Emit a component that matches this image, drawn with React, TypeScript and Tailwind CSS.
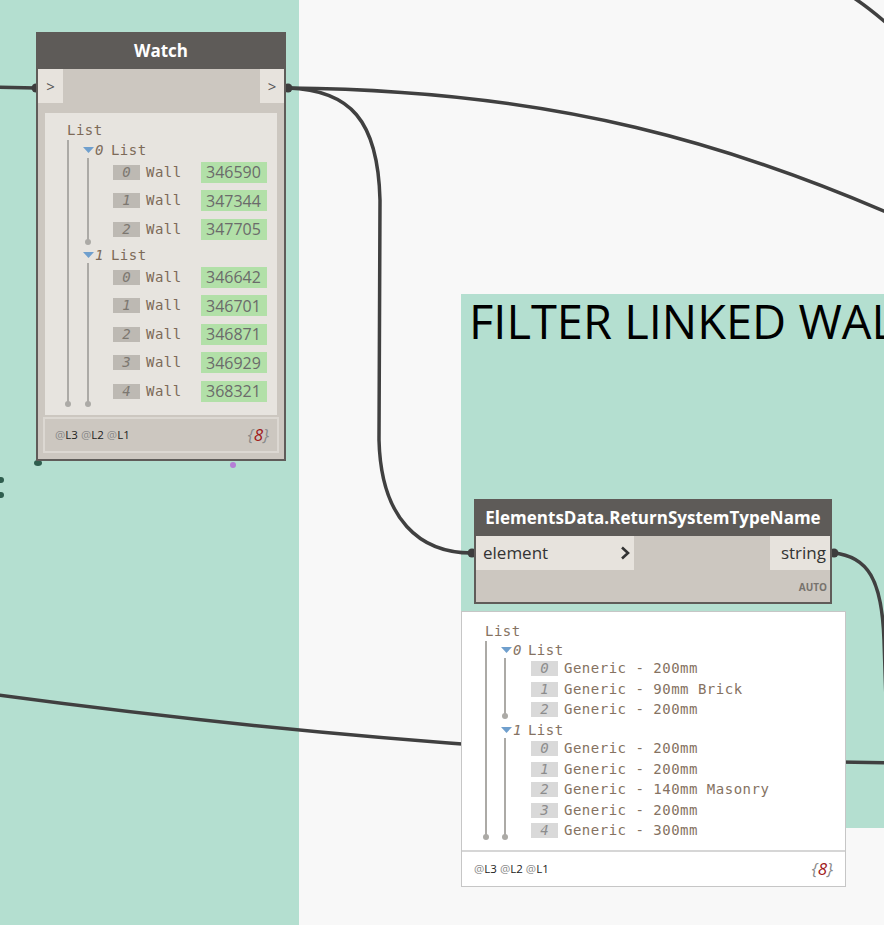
import React from "react";

const WATCH_DATA = [
  ["346590", "347344", "347705"],
  ["346642", "346701", "346871", "346929", "368321"],
];

const PREVIEW_DATA = [
  ["Generic - 200mm", "Generic - 90mm Brick", "Generic - 200mm"],
  ["Generic - 200mm", "Generic - 200mm", "Generic - 140mm Masonry", "Generic - 200mm", "Generic - 300mm"],
];

const mono = { fontFamily: '"DejaVu Sans Mono", "Liberation Mono", monospace' };
const sans = { fontFamily: '"Open Sans", "Noto Sans", sans-serif' };

// little blue disclosure triangle
const Tri = () => (
  <svg width="11" height="6" viewBox="0 0 11 6" className="shrink-0">
    <path d="M0 0 L11 0 L5.5 6 Z" fill="#6f9fcd" />
  </svg>
);

// vertical tree line that ends in a dot
const TreeLine = ({ className }: { className: string }) => (
  <div className={`absolute w-[2px] bg-[#acaaa6] ${className}`}>
    <div className="absolute -bottom-[3px] -left-[2px] h-[6px] w-[6px] rounded-full bg-[#acaaa6]" />
  </div>
);

const WatchTree = () => (
  <div className="relative pl-[22px] pt-[6px] pb-[9px]">
    <div className="flex h-[19.5px] items-center pt-[4px] text-[14px] tracking-[0.5px] text-[#7d6a58]" style={mono}>
      List
    </div>
    <div className="relative">
      <TreeLine className="left-0 top-[1px] bottom-[2px]" />
      {WATCH_DATA.map((sub, si) => (
        <div key={si} className="relative pl-[16px]">
          <div className="flex h-[19.5px] items-center pt-[4px] text-[14px] tracking-[0.5px] text-[#7d6a58]" style={mono}>
            <Tri />
            <span className="ml-[1px] italic">{si}</span>
            <span className="ml-[7px]">List</span>
          </div>
          <TreeLine className="left-[20px] top-[19.5px] bottom-[2px]" />
          {sub.map((v, i) => (
            <div key={i} className="flex h-[28.5px] items-center pl-[30px]">
              <div
                className="flex h-[15px] w-[27px] items-center justify-center bg-[#bdb9b3] text-[14px] italic text-[#7c7770]"
                style={mono}
              >
                {i}
              </div>
              <span className="ml-[6px] w-[55px] text-[14px] tracking-[0.5px] text-[#7d6a58]" style={mono}>
                Wall
              </span>
              <div
                className="flex h-[21px] w-[66px] items-center pl-[5px] text-[16px] text-[#6b6b6b] bg-[#b2e0a8]"
                style={sans}
              >
                {v}
              </div>
            </div>
          ))}
        </div>
      ))}
    </div>
  </div>
);

const PreviewTree = () => (
  <div className="relative pl-[23px] pt-[8.5px] pb-[9.5px]">
    <div className="flex h-[19px] items-center pt-[2px] text-[14px] tracking-[0.5px] text-[#857262]" style={mono}>
      List
    </div>
    <div className="relative">
      <TreeLine className="left-0 top-[1px] bottom-[3.5px]" />
      {PREVIEW_DATA.map((sub, si) => (
        <div key={si} className="relative pl-[16px]">
          <div className="flex h-[18.5px] items-center pt-[3px] text-[14px] tracking-[0.5px] text-[#857262]" style={mono}>
            <Tri />
            <span className="ml-[1px] italic">{si}</span>
            <span className="ml-[6px]">List</span>
          </div>
          <TreeLine className="left-[19px] top-[18.5px] bottom-[3.5px]" />
          {sub.map((v, i) => (
            <div key={i} className="flex h-[20.5px] items-center pl-[30px] pt-[1px]">
              <div
                className="flex h-[15px] w-[27px] items-center justify-center bg-[#d9d9d9] text-[14px] italic text-[#8c8c8c]"
                style={mono}
              >
                {i}
              </div>
              <span className="ml-[6px] whitespace-pre text-[14px] tracking-[0.5px] text-[#857262]" style={mono}>
                {v}
              </span>
            </div>
          ))}
        </div>
      ))}
    </div>
  </div>
);

const Levels = () => (
  <div className="flex gap-[3px] text-[11.5px]" style={sans}>
    {["3", "2", "1"].map((n) => (
      <span key={n}>
        <span className="text-[#8a8a8a]">@</span>
        <span className="text-[#222]">L{n}</span>
      </span>
    ))}
  </div>
);

const Count = () => (
  <span className="text-[17px] italic text-[#8a8a8a]" style={sans}>
    {"{"}
    <span className="text-[#a01818]">8</span>
    {"}"}
  </span>
);

const WatchNode = () => (
  <div className="absolute left-[36px] top-[32px] w-[250px] border-2 border-t-0 border-[#5f5c59] bg-[#ccc7c0]">
    <div className="-mx-[2px] flex h-[37px] items-center justify-center bg-[#5e5b58] text-[17px] font-bold text-white" style={sans}>
      Watch
    </div>
    <div className="flex h-[34px] justify-between">
      <div className="flex w-[25px] items-center justify-center bg-[#e7e3dd] text-[15px] text-[#555]" style={sans}>
        &gt;
      </div>
      <div className="flex w-[24px] items-center justify-center bg-[#e7e3dd] text-[15px] text-[#555]" style={sans}>
        &gt;
      </div>
    </div>
    <div className="mx-[7px] mt-[10px] bg-[#e7e4df]">
      <WatchTree />
    </div>
    <div className="mx-[5px] mt-[2px] mb-[6px] flex h-[36px] items-center justify-between border-2 border-[#dcd8d2] pl-[10px] pr-[8px]">
      <Levels />
      <Count />
    </div>
  </div>
);

const ElementsNode = () => (
  <div className="absolute left-[474px] top-[499px] w-[358px] border-2 border-t-0 border-[#5f5c59] bg-[#ccc7c0]">
    <div className="-mx-[2px] flex h-[37px] items-center justify-center bg-[#5e5b58] text-[17px] font-bold text-white" style={sans}>
      ElementsData.ReturnSystemTypeName
    </div>
    <div className="flex h-[34px] justify-between">
      <div className="flex w-[158px] items-center justify-between bg-[#e7e3dd] pl-[7px] pr-[4px] text-[17px] text-[#333]" style={sans}>
        element
        <svg width="10" height="14" viewBox="0 0 10 14">
          <path d="M2 1.5 L8 7 L2 12.5" fill="none" stroke="#333" strokeWidth="2.6" />
        </svg>
      </div>
      <div className="flex w-[60px] items-center justify-end bg-[#e7e3dd] pr-[4px] text-[17px] text-[#333]" style={sans}>
        string
      </div>
    </div>
    <div className="flex h-[32px] items-end justify-end pb-[7px] pr-[3px] text-[10px] font-bold text-[#77736d]" style={sans}>
      AUTO
    </div>
  </div>
);

const PreviewBox = () => (
  <div className="absolute left-[461px] top-[611px] w-[385px] border-[1.5px] border-[#c6c6c6] bg-white">
    <div className="h-[238px]">
      <PreviewTree />
    </div>
    <div className="flex h-[36px] items-center justify-between border-t-2 border-[#d6d6d6] pl-[12px] pr-[12px]">
      <Levels />
      <Count />
    </div>
  </div>
);

const Wires = () => (
  <svg className="absolute left-0 top-0" width="884" height="925" viewBox="0 0 884 925">
    <g fill="none" stroke="#404040" strokeWidth="3.5" strokeLinecap="round">
      <path d="M-10 87 L36 88" />
      <path d="M288 88 C350 90 378 120 380 200 L379 440 C381 520 420 553 472 553" />
      <path d="M288 88 C560 90 740 148 900 218" />
      <path d="M854 -2 C866 6 876 14 890 26" />
      <path d="M833 553 C868 556 882 580 884 640 L886 700" />
      <path d="M-10 694 C300 736 600 760 900 763" />
    </g>
    <g fill="#3d3d3d">
      <circle cx="36" cy="88" r="4.5" />
      <circle cx="288" cy="88" r="4.5" />
      <circle cx="472" cy="553" r="4.5" />
      <circle cx="834" cy="553" r="4.5" />
    </g>
    <g fill="#2f5e4e">
      <ellipse cx="38" cy="463" rx="4" ry="3" />
      <circle cx="1" cy="480" r="3" />
      <circle cx="1" cy="495" r="3" />
    </g>
    <circle cx="233" cy="465" r="3" fill="#b57fd6" />
  </svg>
);

const App = () => {
  return (
    <div className="relative h-[925px] w-[884px] overflow-hidden bg-[#f8f8f8]">
      {/* groups */}
      <div className="absolute left-0 top-0 h-[925px] w-[299px] bg-[#b4dfd0]" />
      <div className="absolute left-[461px] top-[294px] h-[534px] w-[423px] overflow-hidden bg-[#b4dfd0]">
        <div className="whitespace-nowrap pl-[8px] text-[47px] leading-[54px] text-black" style={sans}>
          FILTER LINKED WAL
        </div>
      </div>

      <Wires />

      <WatchNode />
      <ElementsNode />
      <PreviewBox />
    </div>
  );
};

export default App;
